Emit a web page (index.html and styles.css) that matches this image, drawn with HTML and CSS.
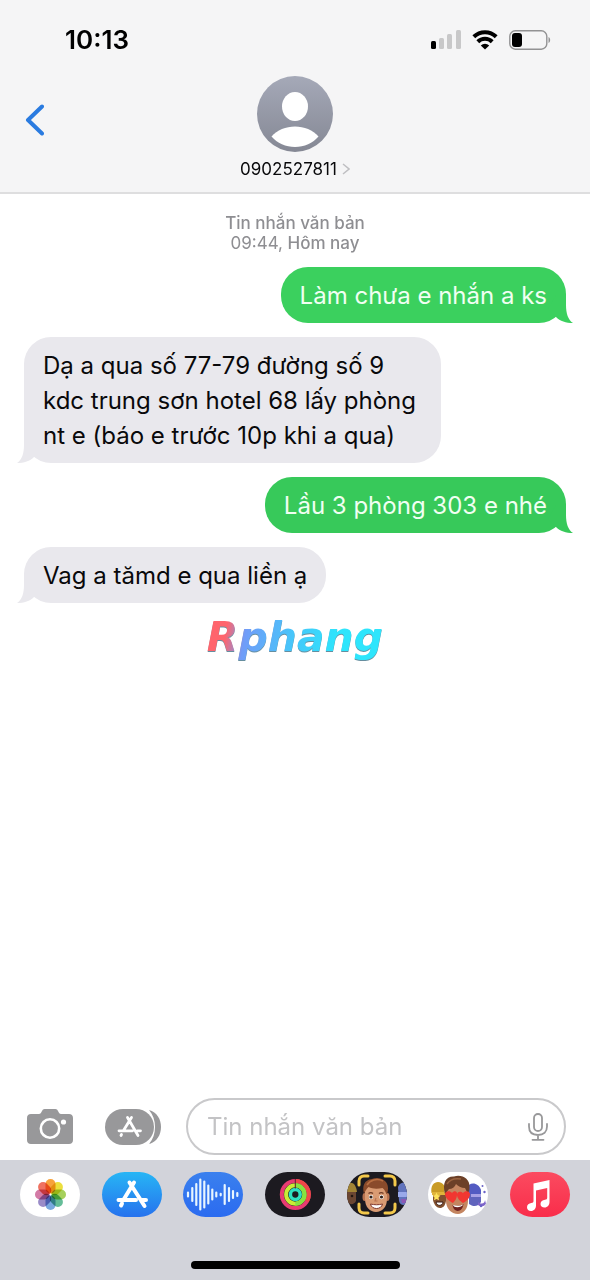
FILE: index.html
```html
<!DOCTYPE html>
<html lang="vi">
  <head>
    <meta charset="utf-8" />
    <meta name="viewport" content="width=device-width, initial-scale=1" />
    <title>0902527811</title>
    <link rel="stylesheet" href="styles.css">
  </head>
  <body>
    <header class="header">
      <div class="status-bar">
        <span class="time">10:13</span>
        <div class="status-icons">
          <svg width="30" height="20" viewBox="0 0 30 20">
            <rect x="0" y="11" width="5" height="8" rx="1.5" fill="#000" />
            <rect x="8" y="8" width="5" height="11" rx="1.5" fill="#c8c8c9" />
            <rect x="16" y="4" width="5" height="15" rx="1.5" fill="#c8c8c9" />
            <rect x="25" y="0" width="5" height="19" rx="1.5" fill="#c8c8c9" />
          </svg>
          <svg width="26" height="20" viewBox="0 0 26 20">
            <path d="M1.8 6.700a16 16 0 0 1 22.4 0M5.800 11.700a10.300 10.300 0 0 1 14.400 0" fill="none" stroke="#000" stroke-width="4" />
            <path d="M8.800 15.400a6 6 0 0 1 8.400 0L13 19.600z" fill="#000" />
          </svg>
          <svg width="42" height="20" viewBox="0 0 42 20">
            <rect x="0.8" y="0.8" width="37" height="18.4" rx="5.5" fill="none" stroke="#929293" stroke-width="1.4" />
            <rect x="3" y="3" width="10" height="14" rx="3" fill="#000" />
            <path d="M39.5 7c2.2 1 2.2 5 0 6z" fill="#929293" />
          </svg>
        </div>
      </div>
      <nav class="nav">
        <button class="back" aria-label="Quay lại">
          <svg width="20" height="32" viewBox="0 0 20 32">
            <path d="M18 2.500 4 16l14 13.500" fill="none" stroke="#2a7be0" stroke-width="4" stroke-linecap="round" stroke-linejoin="round" />
          </svg>
        </button>
        <button class="contact">
          <svg width="76" height="76" viewBox="0 0 76 76">
            <defs>
              <linearGradient id="avatar" x1="0" y1="0" x2="0" y2="1">
                <stop offset="0" stop-color="#a5a9b8" />
                <stop offset="1" stop-color="#858894" />
              </linearGradient>
            </defs>
            <circle cx="38" cy="38" r="38" fill="url(#avatar)" />
            <ellipse cx="38" cy="30.500" rx="13" ry="14.500" fill="#fff" />
            <path d="M14.500 60.500C20 54 29 50.500 38 50.500s18 3.500 23.500 10C56 67 47 71 38 71s-18-4-23.500-10.500z" fill="#fff" />
          </svg>
          <span class="contact-name">
            0902527811
            <svg width="8" height="12" viewBox="0 0 8 12">
              <path d="M1 1l6 5-6 5" fill="none" stroke="#bfbfc2" stroke-width="1.5" />
            </svg>
          </span>
        </button>
      </nav>
    </header>

    <main class="thread">
      <p class="meta">Tin nhắn văn bản<br /><span class="meta-time">09:44,</span> Hôm nay</p>
      <p class="bubble sent">Làm chưa e nhắn a ks</p>
      <p class="bubble received">Dạ a qua số 77-79 đường số 9 kdc trung sơn hotel 68 lấy phòng nt e (báo e trước 10p khi a qua)</p>
      <p class="bubble sent">Lầu 3 phòng 303 e nhé</p>
      <p class="bubble received">Vag a tămd e qua liền ạ</p>
      <p class="brand">Rphang</p>
    </main>

    <form class="composer">
      <button type="button" class="tool camera" aria-label="Camera">
        <svg width="46" height="36" viewBox="0 0 46 36">
          <path d="M4 5h8c1.500 0 2-1 3-3s2-2 4-2h8c2 0 3 0 4 2s1.500 3 3 3h8c2.500 0 4 1.500 4 4v22c0 2.800-1.500 4-4 4H4c-2.500 0-4-1.200-4-4V9c0-2.500 1.500-4 4-4z" fill="#98989a" />
          <circle cx="23" cy="19.500" r="9.200" fill="none" stroke="#fff" stroke-width="2.600" />
          <circle cx="36.500" cy="13" r="2.600" fill="#fff" />
        </svg>
      </button>
      <button type="button" class="tool" aria-label="Ứng dụng">
        <svg width="56" height="36" viewBox="0 0 56 36">
          <path d="M44 1c16 4 16 30 0 34 8-9 8-25 0-34z" fill="#98989a" />
          <rect x="0" y="0" width="49" height="36" rx="18" fill="#98989a" />
          <g fill="none" stroke="#fff" stroke-width="2.800" stroke-linecap="round">
            <path d="M26.500 8.500 18.500 21.500M16.500 25.500l-.5 1M22.500 8.500l10.500 18M14 21.800h13.500M32.500 21.800h3" />
          </g>
        </svg>
      </button>
      <div class="field">
        <input type="text" class="message-input" placeholder="Tin nhắn văn bản" aria-label="Tin nhắn văn bản" />
        <button type="button" class="mic" aria-label="Đọc chính tả">
          <svg width="20" height="28" viewBox="0 0 20 28">
            <g fill="none" stroke="#98989a" stroke-width="1.800" stroke-linecap="round">
              <rect x="6" y="1" width="8" height="17" rx="4" />
              <path d="M1 11v2.500c0 5.500 3.500 8.500 9 8.500s9-3 9-8.500V11M10 22v4.500M4.500 26.800h11" />
            </g>
          </svg>
        </button>
      </div>
    </form>

    <footer class="dock">
      <div class="apps">
        <button class="app photos" aria-label="Ảnh">
          <svg viewBox="0 0 60 45">
            <g class="petals" transform="translate(30.500 22.500)">
              <rect x="-5" y="-15.500" width="10" height="14.500" rx="5" fill="#f7a23b" />
              <rect x="-5" y="-15.500" width="10" height="14.500" rx="5" fill="#ecdf3e" transform="rotate(45)" />
              <rect x="-5" y="-15.500" width="10" height="14.500" rx="5" fill="#a6d05c" transform="rotate(90)" />
              <rect x="-5" y="-15.500" width="10" height="14.500" rx="5" fill="#65bd98" transform="rotate(135)" />
              <rect x="-5" y="-15.500" width="10" height="14.500" rx="5" fill="#79a9df" transform="rotate(180)" />
              <rect x="-5" y="-15.500" width="10" height="14.500" rx="5" fill="#9a8cc8" transform="rotate(225)" />
              <rect x="-5" y="-15.500" width="10" height="14.500" rx="5" fill="#d37ba6" transform="rotate(270)" />
              <rect x="-5" y="-15.500" width="10" height="14.500" rx="5" fill="#ef7260" transform="rotate(315)" />
            </g>
          </svg>
        </button>
        <button class="app store" aria-label="App Store">
          <svg viewBox="0 0 60 45">
            <g fill="none" stroke="#fff" stroke-width="4" stroke-linecap="round">
              <path d="M32 10.500 22 27M20 31.500l-1 2M27.500 10.500 42.500 34M16.500 28h17.500M40 28h4" />
            </g>
          </svg>
        </button>
        <button class="app audio" aria-label="Tin nhắn âm thanh">
          <svg viewBox="0 0 60 45">
            <path d="M5 20.500v4M9.300 16v13M13.300 12v21M17.300 7.500v30M21.300 9.500v26M25.300 13.500v18M29.300 17.500v10M33.300 20.500v4M37.700 21.800v1.500M41.700 13v19M46 16v13M50 19v7M54.300 21v3" fill="none" stroke="#e8f6ff" stroke-width="2.200" stroke-linecap="round" />
          </svg>
        </button>
        <button class="app activity" aria-label="Thể dục">
          <svg viewBox="0 0 60 45">
            <g fill="none" stroke-width="4">
              <circle cx="30.300" cy="22.500" r="13.500" stroke="#e83b72" />
              <path d="M30.300 9a13.500 13.500 0 0 1 11.700 20.200" stroke="#f04848" />
              <circle cx="30.300" cy="22.500" r="9.200" stroke="#c9ec36" />
              <path d="M30.300 13.300a9.200 9.200 0 0 1 0 18.400" stroke="#86e341" />
              <circle cx="30.300" cy="22.500" r="4.900" stroke="#2ee0c1" stroke-width="3.500" />
            </g>
            <path d="M30.300 7v9.500" stroke="#5c1c31" stroke-width="1" />
          </svg>
        </button>
        <button class="app memoji" aria-label="Memoji">
          <svg viewBox="0 0 60 45">
            <path d="M0 20h9v9c-2 4-6 4-9 1z" fill="#6b4632" />
            <path d="M0 12c5-3 9 0 10 8H0z" fill="#a18335" />
            <circle cx="5" cy="24" r="1.300" fill="#241711" />
            <path d="M51 15c2-5 6-5 9-4v21c-4 2-7 1-8-3z" fill="#6173bd" />
            <path d="M51 20h9v5h-9z" fill="#9aa9ea" />
            <path d="M54 27h6v4h-5z" fill="#8d58b5" />
            <path d="M12 13V9c0-3 2-5 5-5h4M38 4h5c3 0 5 2 5 5v4M12 32v4c0 3 2 5 5 5h4M38 41h5c3 0 5-2 5-5v-4" fill="none" stroke="#f3c84b" stroke-width="3" stroke-linecap="round" />
            <ellipse cx="17.500" cy="25" rx="2" ry="4" fill="#b87350" />
            <ellipse cx="40.500" cy="25" rx="2" ry="4" fill="#b87350" />
            <path d="M18 17c2-6 20-6 22 0v10c0 8-5 13-11 13s-11-5-11-13z" fill="#d99b73" />
            <path d="M17 22c-2-8 0-14 8-15 7-3 16 1 16 9 0 3-.5 5-1.500 6.500-1-3-2-5-4-6.500-5 1-10 1-14-1-2 2-3.500 4-4.500 7z" fill="#8a4b2b" />
            <path d="M20 13c3-5 10-7 16-4" fill="none" stroke="#b86f42" stroke-width="1.500" />
            <path d="M21.500 21.500c1.500-1.200 3-1.200 4.500 0M32 21.500c1.500-1.200 3-1.200 4.500 0" fill="none" stroke="#6e3b25" stroke-width="1.300" />
            <circle cx="24" cy="25" r="2.200" fill="#fff" />
            <circle cx="34.500" cy="25" r="2.200" fill="#fff" />
            <circle cx="24" cy="25" r="1.600" fill="#302019" />
            <circle cx="34.500" cy="25" r="1.600" fill="#302019" />
            <path d="M29 26l-1 3h2.500" fill="none" stroke="#b87350" stroke-width="1.200" />
            <path d="M23.500 32c4 1 8 1 12 0-1 6-11 6-12 0z" fill="#fff" stroke="#80382c" stroke-width="1" />
          </svg>
        </button>
        <button class="app stickers" aria-label="Nhãn dán">
          <svg viewBox="0 0 60 45">
            <path d="M5 20h13v9c-1 5-3 7-6 7s-6-3-7-8z" fill="#81502f" />
            <path d="M3.500 21c-2-12 9-14 13-7v7z" fill="#c99b26" />
            <path d="M4 20h13v3H4z" fill="#e0b53b" />
            <path d="M8.500 20.500l1.200 2.500 2.800.4-2 2 .5 2.800-2.500-1.300L6 28.200l.5-2.800-2-2 2.800-.4z" fill="#ffe35b" />
            <path d="M8 30h7c0 4-6 5-7 0z" fill="#fff" stroke="#3a1d17" stroke-width="1" />
            <path d="M41 20h12v10c-3 5-8 5-12 2z" fill="#6064bd" />
            <path d="M41 13c4-3 10-1 12 5v4H41z" fill="#535bc2" />
            <path d="M43 22h10v3H43z" fill="#a8a1e5" />
            <path d="M50 30c4 3 7 1 7-2l1 4c-2 3-6 3-8 1z" fill="#7e65c9" />
            <g fill="#6962c7">
              <circle cx="54.500" cy="14" r="1" />
              <circle cx="56.500" cy="20" r="1.200" />
              <circle cx="53" cy="34" r="1.200" />
            </g>
            <path d="M18 16c3-6 20-6 22 0v13c0 8-5 13-10 13-7 0-12-6-12-13z" fill="#c48560" />
            <path d="M17 22C14 11 18 4 26 4.500 34 2 42 7 41.500 15c0 3-.5 5-1.500 7l-3-6c-4 0-7-2-9-4-1 3-4 5-7 5z" fill="#6c4028" />
            <path d="M19 12c3-5 8-6 14-5" fill="none" stroke="#9b6340" stroke-width="1.500" />
            <path d="M25 31c-4-2-8-5-8-9 0-3 5-4 7-1 2-3 6-2 5 2 0 3-2 6-4 8zM35 31c-3-2-6-5-6-8 0-4 4-4 6-2 2-3 7-2 7 1 0 4-3 7-7 9z" fill="#f13731" />
            <path d="M24.500 33c4 1 8 1 11-1-1 9-10 9-11 1z" fill="#6e2220" />
            <path d="M25 33c4 1 7 1 10-.5-1 3-9 4-10 .5z" fill="#fff" />
          </svg>
        </button>
        <button class="app music" aria-label="Nhạc">
          <svg viewBox="0 0 60 45">
            <path d="M23.500 11.500 39.500 8v22c0 3-2 5.500-5 5.500-2.500 0-4-1.500-4-3.500 0-2.500 2-4 4.500-4.300 1.500-.2 2.200-.7 2.200-2V16L26 18.500v15c0 3-2 5.500-5 5.500-2.500 0-4-1.500-4-3.700 0-2.500 2-4 4.300-4.300 1.600-.2 2.200-.7 2.200-2z" fill="#fff" />
          </svg>
        </button>
      </div>
      <div class="home-indicator"></div>
    </footer>
  </body>
</html>
```
FILE: styles.css
```css
* {
  box-sizing: border-box;
}
body {
  margin: 0;
  min-height: 100vh;
  display: flex;
  flex-direction: column;
  background: #fff;
  color: #09090b;
  font-family: Inter, "Noto Sans", sans-serif;
}
button {
  border: none;
  background: none;
  padding: 0;
  font: inherit;
  color: inherit;
  cursor: pointer;
}
svg {
  display: block;
}
p {
  margin: 0;
}

/* header */
.header {
  background: #f5f5f6;
  border-bottom: 2px solid #dededf;
  padding-bottom: 13px;
}
.status-bar {
  display: flex;
  justify-content: space-between;
  align-items: center;
  padding: 24px 39px 0 65px;
}
.time {
  font-size: 26px;
  line-height: 32px;
  font-weight: 600;
  color: #000;
}
.status-icons {
  display: flex;
  align-items: center;
  gap: 11px;
}
.nav {
  display: grid;
  grid-template-columns: 1fr auto 1fr;
  align-items: start;
  padding: 20px 24px 0;
}
.back {
  justify-self: start;
  padding: 28px 0;
}
.contact {
  display: flex;
  flex-direction: column;
  align-items: center;
  gap: 7px;
}
.contact-name {
  display: flex;
  align-items: center;
  gap: 5px;
  font-size: 17px;
  line-height: 20px;
}

/* messages */
.thread {
  flex: 1;
  display: flex;
  flex-direction: column;
  gap: 14px;
  padding: 19px 24px;
}
.meta {
  text-align: center;
  font-size: 17px;
  line-height: 20px;
  font-weight: 500;
  color: #8e8e92;
}
.meta-time {
  font-weight: 400;
}
.bubble {
  position: relative;
  max-width: 77%;
  padding: 11px 19px 10px;
  border-radius: 27px;
  font-size: 24px;
  line-height: 35px;
}
.bubble::after {
  content: "";
  position: absolute;
  bottom: 0;
  right: -7px;
  width: 25px;
  height: 28px;
  background: inherit;
  clip-path: path("M18 0V10C18 18 20 25 25 28C18 28 12 26 8 22L0 14L8 0Z");
}
.sent {
  align-self: flex-end;
  background: #3bd05e;
  color: #f0fff2;
}
.sent ~ .sent {
  background: #37c95a;
}
.received {
  align-self: flex-start;
  background: #e9e8ed;
}
.received::after {
  right: auto;
  left: -7px;
  transform: scaleX(-1);
}
.brand {
  align-self: center;
  padding: 0 6px 6px;
  font-family: "DejaVu Sans", sans-serif;
  font-size: 41px;
  line-height: 40px;
  font-weight: 700;
  font-style: italic;
  color: transparent;
  background: linear-gradient(100deg, #ff656d 14%, #709cf8 24%, #48c5fa 48%, #2ee5fc 72%);
  background-clip: text;
  -webkit-background-clip: text;
  filter: drop-shadow(0 1px 0 #668e9f);
}

/* message box */
.composer {
  display: flex;
  align-items: center;
  padding: 0 24px 5px 27px;
}
.tool {
  margin-right: 25px;
}
.camera {
  margin-right: 32px;
}
.field {
  flex: 1;
  min-width: 0;
  display: flex;
  align-items: center;
  height: 57px;
  padding: 0 16px 0 19px;
  border: 2px solid #c9c9cb;
  border-radius: 29px;
}
.message-input {
  flex: 1;
  min-width: 0;
  padding: 0;
  border: none;
  outline: none;
  background: none;
  font: inherit;
  font-size: 24px;
  line-height: 35px;
}
.message-input::placeholder {
  color: #c3c3c5;
}

/* app strip */
.dock {
  background: #d2d3da;
  padding: 12px 20px 11px;
}
.apps {
  display: flex;
  justify-content: space-between;
}
.app {
  width: 60px;
  height: 45px;
  border-radius: 23px;
  overflow: hidden;
}
.photos,
.stickers {
  background: #fff;
}
.petals rect {
  mix-blend-mode: multiply;
}
.store {
  background: linear-gradient(#27b5f5, #2672ee);
}
.audio {
  background: linear-gradient(#3a80ee, #2b6bf0);
}
.activity,
.memoji {
  background: #1c1a20;
}
.music {
  background: linear-gradient(#fb4b60, #f92d4a);
}
.home-indicator {
  width: 38%;
  height: 8px;
  margin: 44px auto 0;
  border-radius: 4px;
  background: #000;
}
```
